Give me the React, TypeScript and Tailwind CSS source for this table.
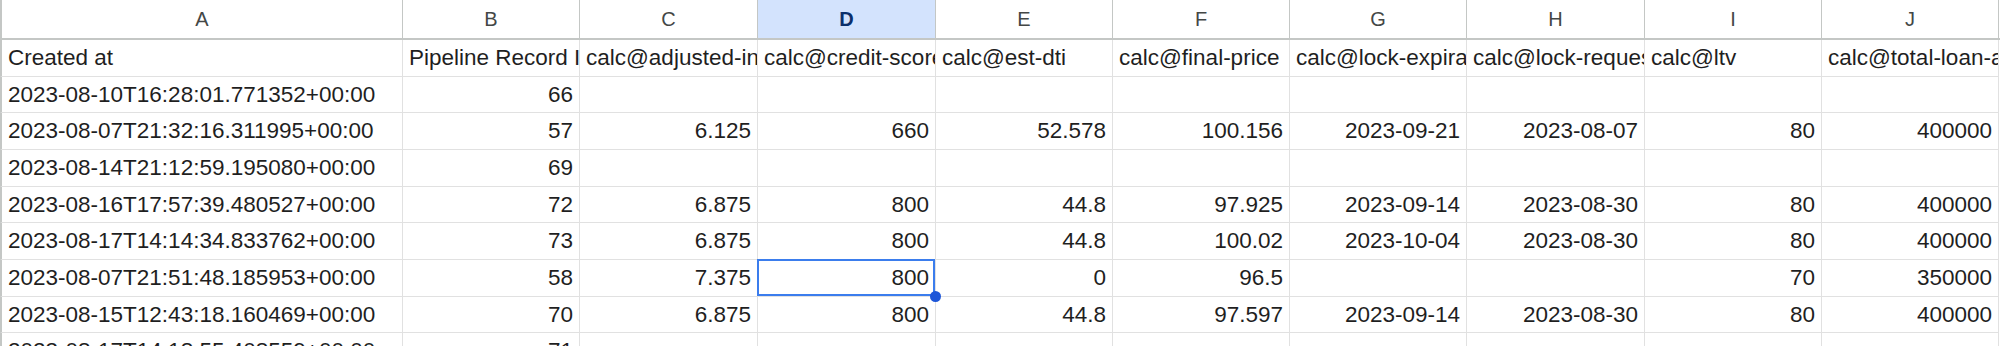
import React from 'react';

type Cell = string | number | null;

const COLS = ['A', 'B', 'C', 'D', 'E', 'F', 'G', 'H', 'I', 'J'];

// widths include the right grid line
const COL_W = [
  'w-[403px]',
  'w-[177px]',
  'w-[178px]',
  'w-[178px]',
  'w-[177px]',
  'w-[177px]',
  'w-[177px]',
  'w-[178px]',
  'w-[177px]',
  'w-[177px]',
];

const ROW_H = ['h-[37px]', 'h-[36px]', 'h-[37px]', 'h-[37px]', 'h-[36px]', 'h-[37px]', 'h-[37px]', 'h-[36px]', 'h-[37px]'];

const HEADERS = [
  'Created at',
  'Pipeline Record ID',
  'calc@adjusted-interest-rate',
  'calc@credit-score',
  'calc@est-dti',
  'calc@final-price',
  'calc@lock-expiration',
  'calc@lock-requested',
  'calc@ltv',
  'calc@total-loan-amount',
];

const ROWS: Cell[][] = [
  ['2023-08-10T16:28:01.771352+00:00', 66, null, null, null, null, null, null, null, null],
  ['2023-08-07T21:32:16.311995+00:00', 57, '6.125', 660, '52.578', '100.156', '2023-09-21', '2023-08-07', 80, 400000],
  ['2023-08-14T21:12:59.195080+00:00', 69, null, null, null, null, null, null, null, null],
  ['2023-08-16T17:57:39.480527+00:00', 72, '6.875', 800, '44.8', '97.925', '2023-09-14', '2023-08-30', 80, 400000],
  ['2023-08-17T14:14:34.833762+00:00', 73, '6.875', 800, '44.8', '100.02', '2023-10-04', '2023-08-30', 80, 400000],
  ['2023-08-07T21:51:48.185953+00:00', 58, '7.375', 800, 0, '96.5', null, null, 70, 350000],
  ['2023-08-15T12:43:18.160469+00:00', 70, '6.875', 800, '44.8', '97.597', '2023-09-14', '2023-08-30', 80, 400000],
  ['2023-08-17T14:18:55.408559+00:00', 71, null, null, null, null, null, null, null, null],
];

const SEL_ROW = 5;
const SEL_COL = 3;

export default function App() {
  return (
    <div className="w-[2000px] h-[346px] overflow-hidden bg-white font-['Liberation_Sans',Arial,sans-serif] text-[22.5px] text-[#1f1f1f]">
      {/* column letters */}
      <div className="flex h-[40px] border-b-2 border-[#c4c7c5]">
        {COLS.map((c, i) => (
          <div
            key={c}
            className={`${COL_W[i]} shrink-0 flex items-center justify-center border-r border-[#c4c7c5] text-[20px] ${i === 0 ? 'border-l-2' : ''} ${
              i === SEL_COL ? 'bg-[#d3e3fd] text-[#0b2f6b] font-bold' : 'text-[#444746]'
            }`}
          >
            {c}
          </div>
        ))}
      </div>

      {/* header row */}
      <div className="flex h-[37px]">
        {HEADERS.map((h, i) => (
          <div
            key={h}
            className={`${COL_W[i]} shrink-0 flex items-center overflow-hidden whitespace-nowrap border-r border-b border-[#e1e1e1] pl-[6px] ${i === 0 ? 'border-l-2 border-l-[#c4c7c5]' : ''}`}
          >
            {h}
          </div>
        ))}
      </div>

      {ROWS.map((row, r) => (
        <div key={r} className={`flex ${ROW_H[r + 1]}`}>
          {row.map((v, i) => {
            const left = i === 0;
            const selected = r === SEL_ROW && i === SEL_COL;
            return (
              <div
                key={i}
                className={`${COL_W[i]} shrink-0 relative flex items-center overflow-visible whitespace-nowrap border-r border-b border-[#e1e1e1] ${
                  left ? 'justify-start pl-[6px] border-l-2 border-l-[#c4c7c5]' : 'justify-end pr-[6px]'
                }`}
              >
                <span className="overflow-hidden">{v}</span>
                {selected && (
                  <>
                    <div className="absolute -left-px -top-px right-0 bottom-0 border-2 border-[#3b7ded] pointer-events-none" />
                    <div className="absolute -right-[6px] -bottom-[6px] w-[11px] h-[11px] rounded-full bg-[#1d56d8] z-10" />
                  </>
                )}
              </div>
            );
          })}
        </div>
      ))}
    </div>
  );
}
